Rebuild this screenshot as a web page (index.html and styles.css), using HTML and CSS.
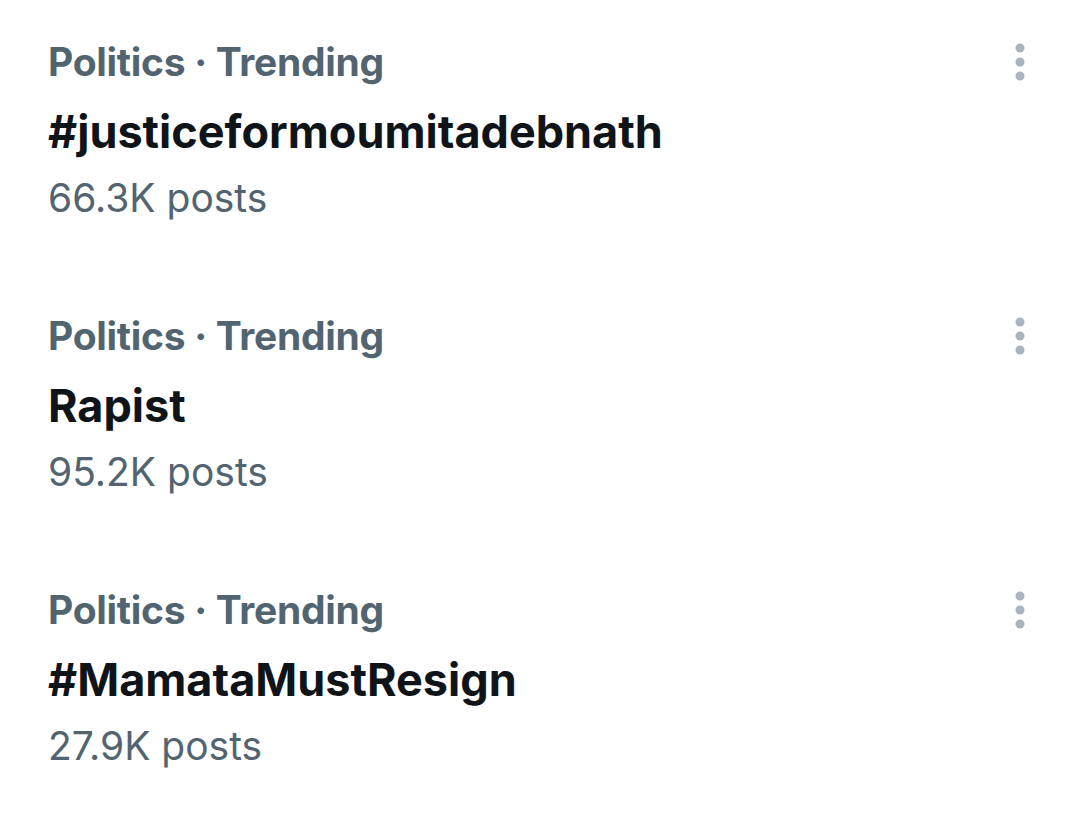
FILE: index.html
```html
<!DOCTYPE html>
<html lang="en">
<head>
    <meta charset="UTF-8">
    <title>Trending</title>
    <link rel="stylesheet" href="styles.css">
</head>
<body>
    <div class="trends">
        <div class="trend">
            <div class="trend-text">
                <div class="meta">Politics · Trending</div>
                <div class="topic">#justiceformoumitadebnath</div>
                <div class="count">66.3K posts</div>
            </div>
            <button class="more" type="button">
                <svg width="10" height="38" viewBox="0 0 10 38"><circle cx="5" cy="5" r="4.5"/><circle cx="5" cy="19" r="4.5"/><circle cx="5" cy="33" r="4.5"/></svg>
            </button>
        </div>
        <div class="trend">
            <div class="trend-text">
                <div class="meta">Politics · Trending</div>
                <div class="topic">Rapist</div>
                <div class="count">95.2K posts</div>
            </div>
            <button class="more" type="button">
                <svg width="10" height="38" viewBox="0 0 10 38"><circle cx="5" cy="5" r="4.5"/><circle cx="5" cy="19" r="4.5"/><circle cx="5" cy="33" r="4.5"/></svg>
            </button>
        </div>
        <div class="trend">
            <div class="trend-text">
                <div class="meta">Politics · Trending</div>
                <div class="topic">#MamataMustResign</div>
                <div class="count">27.9K posts</div>
            </div>
            <button class="more" type="button">
                <svg width="10" height="38" viewBox="0 0 10 38"><circle cx="5" cy="5" r="4.5"/><circle cx="5" cy="19" r="4.5"/><circle cx="5" cy="33" r="4.5"/></svg>
            </button>
        </div>
    </div>
</body>
</html>
```

FILE: styles.css
```css
body {
    margin: 0;
    background-color: #fff;
    font-family: Inter, "Noto Sans", sans-serif;
}
.trends {
    padding: 38px 55px 0 48px;
}
.trend {
    display: flex;
    justify-content: space-between;
    align-items: flex-start;
}
.trend + .trend {
    margin-top: 90px;
}
.meta {
    font-size: 39px;
    line-height: 48px;
    font-weight: 700;
    letter-spacing: -0.3px;
    color: #536471;
}
.topic {
    margin-top: 16px;
    font-size: 45px;
    line-height: 60px;
    font-weight: 700;
    color: #0f1419;
}
.count {
    margin-top: 12px;
    font-size: 39px;
    line-height: 48px;
    color: #536471;
}
.more {
    display: flex;
    align-items: center;
    height: 48px;
    padding: 0;
    border: none;
    background: none;
}
.more svg {
    fill: #aab4bd;
}
```
